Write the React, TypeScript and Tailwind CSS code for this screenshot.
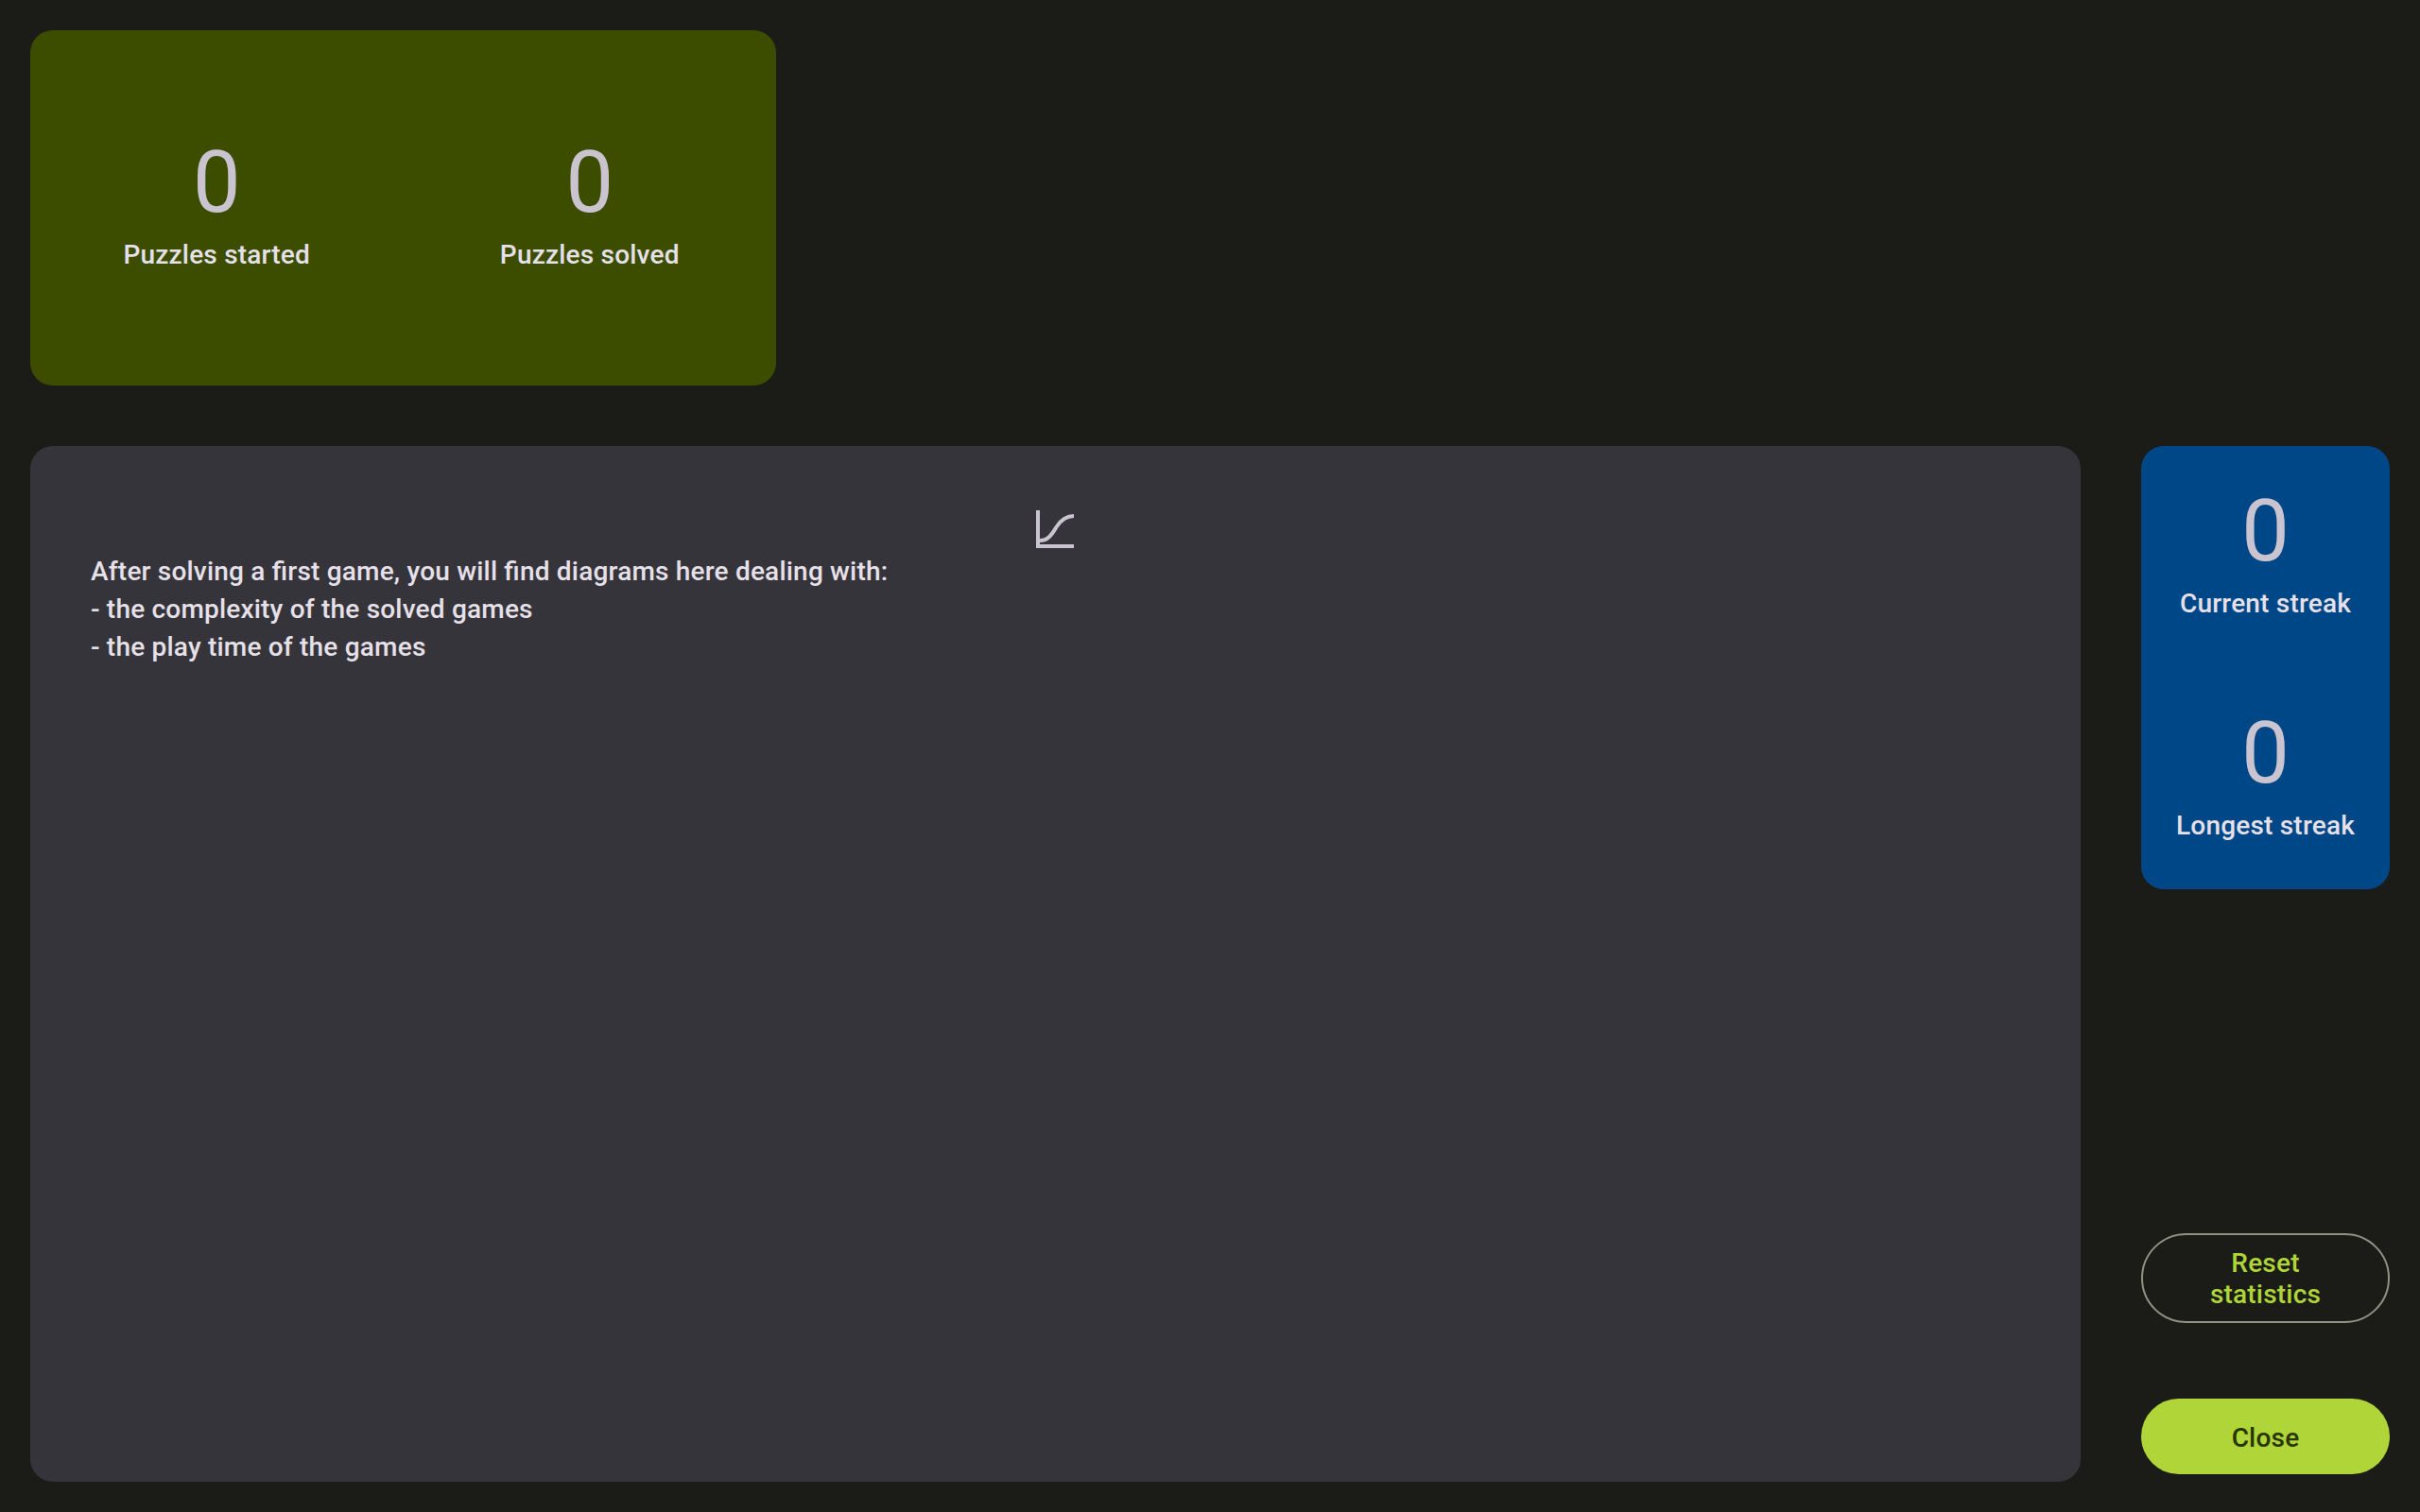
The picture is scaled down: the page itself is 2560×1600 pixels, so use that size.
type StatProps = { value: number; label: string };

function Stat({ value, label }: StatProps) {
  return (
    <div className="flex flex-col items-center gap-1 pb-2">
      <dd className="order-1 text-[90px] leading-[104px] text-[#cac4d0]">{value}</dd>
      <dt className="order-2 text-center text-[28px] leading-10 font-medium tracking-[0.2px] text-[#e6e0e9]">{label}</dt>
    </div>
  );
}

function ChartIcon() {
  return (
    <svg className="size-12 text-[#cac4d0]" viewBox="0 0 48 48" fill="none" stroke="currentColor" strokeWidth="4" aria-hidden="true">
      <path d="M6 4V42H44" />
      <path d="M8 36C18 36 22 27 26 21C30 15 35 10 44 10" />
    </svg>
  );
}

export default function App() {
  return (
    <main className="flex min-h-screen flex-col gap-16 bg-[#1b1c17] p-8 font-['Roboto',sans-serif] [font-feature-settings:'liga']">
      <dl className="grid w-[31.61%] grid-cols-2 rounded-3xl bg-[#3c4d00] py-[110px]">
        <Stat value={0} label="Puzzles started" />
        <Stat value={0} label="Puzzles solved" />
      </dl>
      <div className="grid grow grid-cols-[1fr_263px] gap-16">
        <section className="flex flex-col items-center rounded-3xl bg-[#36343b] py-16 pr-[65px] pl-16">
          <ChartIcon />
          <p className="w-full pt-px text-[28px] leading-10 font-medium tracking-[0.2px] text-[#e6e0e9]">
            After solving a first game, you will find diagrams here dealing with:
            <br />- the complexity of the solved games
            <br />- the play time of the games
          </p>
        </section>
        <aside className="flex flex-col justify-between pb-2">
          <dl className="flex flex-col gap-[79px] rounded-3xl bg-[#004787] py-[39px]">
            <Stat value={0} label="Current streak" />
            <Stat value={0} label="Longest streak" />
          </dl>
          <div className="flex flex-col gap-20">
            <button type="button" className="rounded-full border-2 border-[#919283] px-12 pt-[13px] pb-3 text-[28px] leading-[33px] font-medium tracking-[0.2px] text-[#afd538]">
              Reset statistics
            </button>
            <button type="button" className="h-20 rounded-full bg-[#afd538] px-12 pt-0.5 text-[28px] leading-[33px] font-medium tracking-[0.2px] text-[#283500]">
              Close
            </button>
          </div>
        </aside>
      </div>
    </main>
  );
}
